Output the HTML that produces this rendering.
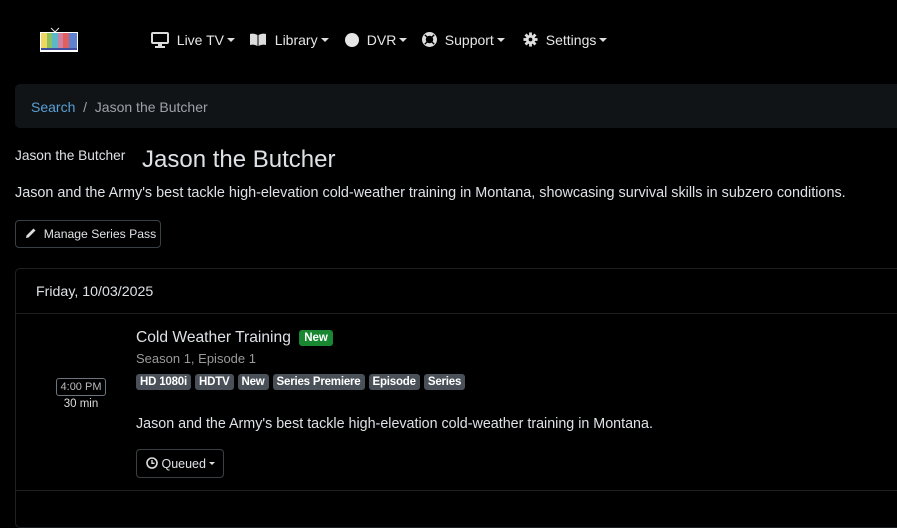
<!DOCTYPE html>
<html><head><style>
*{margin:0;padding:0;box-sizing:border-box}
body{width:897px;height:506px;background:#000;color:#dee2e6;font-family:"Liberation Sans",sans-serif;position:relative;overflow:hidden}
.a{position:absolute;white-space:nowrap}
.nav{font-size:14px;color:#e6e6e6}
.car{display:inline-block;border-left:4px solid transparent;border-right:4px solid transparent;border-top:4px solid #ddd;vertical-align:middle;margin-left:3px;margin-top:-2px}
.b{display:inline-block;background:#495057;color:#fff;font-size:11.5px;font-weight:bold;padding:2px 4px;border-radius:3px;margin-right:4px;letter-spacing:-0.2px}
</style></head><body>
<svg class="a" style="left:38px;top:26px" width="42" height="27" viewBox="0 0 42 27">
<line x1="13" y1="2" x2="17" y2="6" stroke="#eee" stroke-width="1"/><line x1="21" y1="2" x2="17" y2="6" stroke="#eee" stroke-width="1"/>
<rect x="2" y="6" width="38" height="20" fill="#fff"/>
<rect x="3" y="7" width="6" height="17" fill="#f0d860"/><rect x="9" y="7" width="5" height="17" fill="#8cc060"/><rect x="14" y="7" width="6" height="17" fill="#5cb8c8"/><rect x="20" y="7" width="5" height="17" fill="#d080a0"/><rect x="25" y="7" width="6" height="17" fill="#e06060"/><rect x="31" y="7" width="8" height="17" fill="#6080d0"/>
<rect x="3" y="22" width="36" height="2" fill="#4050a0"/>
</svg>
<div class="a nav" style="left:151px;top:32px">
<svg width="18" height="16" viewBox="0 0 18 16" style="vertical-align:-3px"><rect x="1" y="1" width="16" height="10" rx="1" fill="none" stroke="#ddd" stroke-width="2"/><rect x="7" y="11" width="4" height="3" fill="#ddd"/><rect x="4" y="14" width="10" height="2" fill="#ddd"/></svg>&nbsp; Live TV<span class="car"></span>
</div>
<div class="a nav" style="left:249px;top:32px">
<svg width="18" height="14" viewBox="0 0 18 14" style="vertical-align:-2px"><path d="M1 1 Q5 0 8.5 2 V13 Q5 11 1 12Z M17 1 Q13 0 9.5 2 V13 Q13 11 17 12Z" fill="#ddd"/></svg>&nbsp; Library<span class="car"></span>
</div>
<div class="a nav" style="left:345px;top:32px">
<svg width="14" height="14" style="vertical-align:-2px"><circle cx="7" cy="7" r="7" fill="#e6e6e6"/></svg>&nbsp; DVR<span class="car"></span>
</div>
<div class="a nav" style="left:422px;top:32px">
<svg width="15" height="15" viewBox="0 0 16 16" style="vertical-align:-2px"><circle cx="8" cy="8" r="6" fill="none" stroke="#ddd" stroke-width="4"/><circle cx="8" cy="8" r="2.5" fill="#000"/><path d="M3 3L6 6M13 3L10 6M3 13L6 10M13 13L10 10" stroke="#000" stroke-width="1.5"/></svg>&nbsp; Support<span class="car"></span>
</div>
<div class="a nav" style="left:523px;top:32px">
<svg width="15" height="15" viewBox="0 0 16 16" style="vertical-align:-2px"><g stroke="#ddd" stroke-width="3"><line x1="8" y1="0.5" x2="8" y2="15.5"/><line x1="0.5" y1="8" x2="15.5" y2="8"/><line x1="2.7" y1="2.7" x2="13.3" y2="13.3"/><line x1="13.3" y1="2.7" x2="2.7" y2="13.3"/></g><circle cx="8" cy="8" r="5" fill="#ddd"/><circle cx="8" cy="8" r="2" fill="#000"/></svg>&nbsp; Settings<span class="car"></span>
</div>
<div class="a" style="left:15px;top:84px;width:890px;height:44px;background:#111416;border-radius:5px"></div>
<div class="a" style="left:31px;top:99px;font-size:14px;color:#9ca3a8"><span style="color:#5a9fd6">Search</span>&nbsp; / &nbsp;Jason the Butcher</div>
<div class="a" style="left:15px;top:148px;font-size:13.7px;color:#dee2e6">Jason the Butcher</div>
<div class="a" style="left:142px;top:146px;font-size:24px;color:#dee2e6">Jason the Butcher</div>
<div class="a" style="left:15px;top:185px;font-size:14.4px;color:#dee2e6">Jason and the Army's best tackle high-elevation cold-weather training in Montana, showcasing survival skills in subzero conditions.</div>
<div class="a" style="left:15px;top:220px;width:146px;height:28px;border:1px solid #3a3f44;border-radius:4px;font-size:12.2px;padding:6px 0 0 9px;color:#dee2e6">
<svg width="12" height="12" viewBox="0 0 12 12" style="vertical-align:-1px"><path d="M1 11 L1.5 8.5 L8.5 1.5 L10.5 3.5 L3.5 10.5Z" fill="#ddd"/></svg>&nbsp; Manage Series Pass</div>
<div class="a" style="left:15px;top:268px;width:900px;height:260px;border:1px solid #1e2124;border-radius:5px"></div>
<div class="a" style="left:16px;top:313px;width:900px;height:1px;background:#1e2124"></div>
<div class="a" style="left:16px;top:490px;width:900px;height:1px;background:#1e2124"></div>
<div class="a" style="left:36px;top:284px;font-size:14.2px">Friday, 10/03/2025</div>
<div class="a" style="left:56px;top:378px;width:50px;height:18px;border:1px solid #6c757d;border-radius:3px;font-size:11px;text-align:center;line-height:16px;color:#bbb">4:00 PM</div>
<div class="a" style="left:56px;top:398px;width:50px;font-size:11.5px;text-align:center;color:#ddd">30 min</div>
<div class="a" style="left:136px;top:329px;font-size:15.6px;color:#dee2e6">Cold Weather Training <span style="display:inline-block;background:#198731;color:#fff;font-size:11.5px;font-weight:bold;padding:2px 5px;border-radius:3px;margin-left:4px;vertical-align:1px">New</span></div>
<div class="a" style="left:136px;top:351px;font-size:13px;color:#9a9a9a">Season 1, Episode 1</div>
<div class="a" style="left:136px;top:372px"><span class="b">HD 1080i</span><span class="b">HDTV</span><span class="b">New</span><span class="b">Series Premiere</span><span class="b">Episode</span><span class="b">Series</span></div>
<div class="a" style="left:136px;top:416px;font-size:14.3px">Jason and the Army's best tackle high-elevation cold-weather training in Montana.</div>
<div class="a" style="left:136px;top:449px;width:88px;height:29px;border:1px solid #3a3f44;border-radius:4px;font-size:12.5px;padding:7px 0 0 9px">
<svg width="12" height="12" viewBox="0 0 12 12" style="vertical-align:-1px"><circle cx="6" cy="6" r="5" fill="none" stroke="#ddd" stroke-width="1.6"/><path d="M6 3V6.3H8.5" fill="none" stroke="#ddd" stroke-width="1.4"/></svg> Queued<span class="car" style="border-width:3px;border-top-width:3px"></span></div>
</body></html>
